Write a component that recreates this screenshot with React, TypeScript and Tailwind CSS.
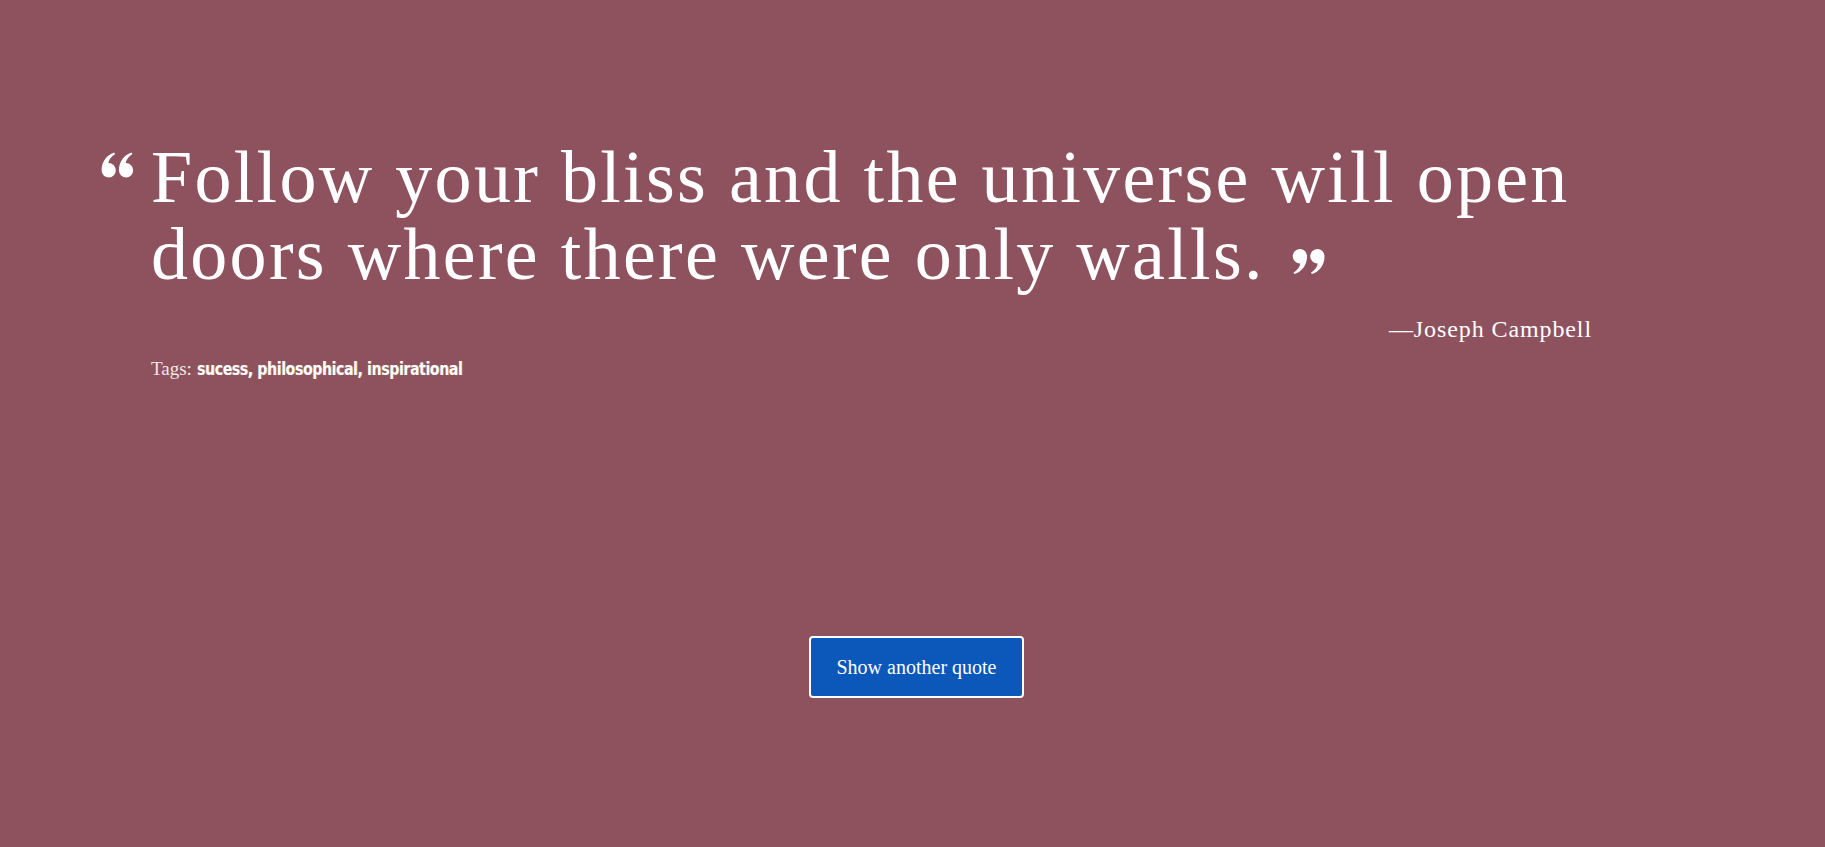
import React from "react";

const serif = "font-['Liberation_Serif','Times_New_Roman',serif]";

function QuoteMark({ open }: { open?: boolean }) {
  // two filled "9" commas; rotated for the opening mark
  const comma =
    "M8 0.5 A7.5 7.5 0 0 1 15.5 8 C15.5 17 10.5 23.5 2.5 26.5 L1.5 25 C6 22 8 19 8.5 15.5 A7.5 7.5 0 1 1 8 0.5 Z";
  return (
    <svg
      viewBox="0 0 34 27"
      className={open ? "w-[35px] h-[26px] rotate-180" : "w-[33px] h-[29px]"}
      fill="#ffffff"
    >
      <path d={comma} />
      <path d={comma} transform="translate(18 0)" />
    </svg>
  );
}

const TAGS = ["sucess", "philosophical", "inspirational"];

export default function App() {
  return (
    <div className={`min-h-screen w-full bg-[#8e525f] text-white ${serif}`}>
      <div className="flex flex-col pt-[139px]">
        <div className="flex pl-[100px]">
          <div className="mt-[13px] shrink-0">
            <QuoteMark open />
          </div>
          <div className="ml-[16px] w-[1441px]">
            <blockquote className="text-[74px] leading-[77px] tracking-[2.3px]">
              Follow your bliss and the universe will open doors where there were only walls.{" "}
              <span className="ml-[6px] inline-block align-[3px]">
                <QuoteMark />
              </span>
            </blockquote>
            <p className="mt-[20px] text-right text-[24px] leading-[32px] tracking-[0.9px]">
              —Joseph Campbell
            </p>
            <p className="mt-[12px] text-[19px] leading-[24px] text-[#f3e6ea]">
              Tags:{" "}
              <span className="inline-block origin-left scale-x-[0.92] font-['Liberation_Sans_Narrow','DejaVu_Sans_Condensed',sans-serif] font-bold text-[17px] tracking-[-0.4px] text-white [text-shadow:1px_0_0_rgba(230,220,120,0.35)]">
                {TAGS.join(", ")}
              </span>
            </p>
          </div>
        </div>

        <div className="mt-[255px] flex justify-center pl-[8px]">
          <button className="h-[62px] w-[215px] rounded-[4px] border-2 border-white bg-[#0b57ba] text-[20px] text-white">
            Show another quote
          </button>
        </div>
      </div>
    </div>
  );
}
